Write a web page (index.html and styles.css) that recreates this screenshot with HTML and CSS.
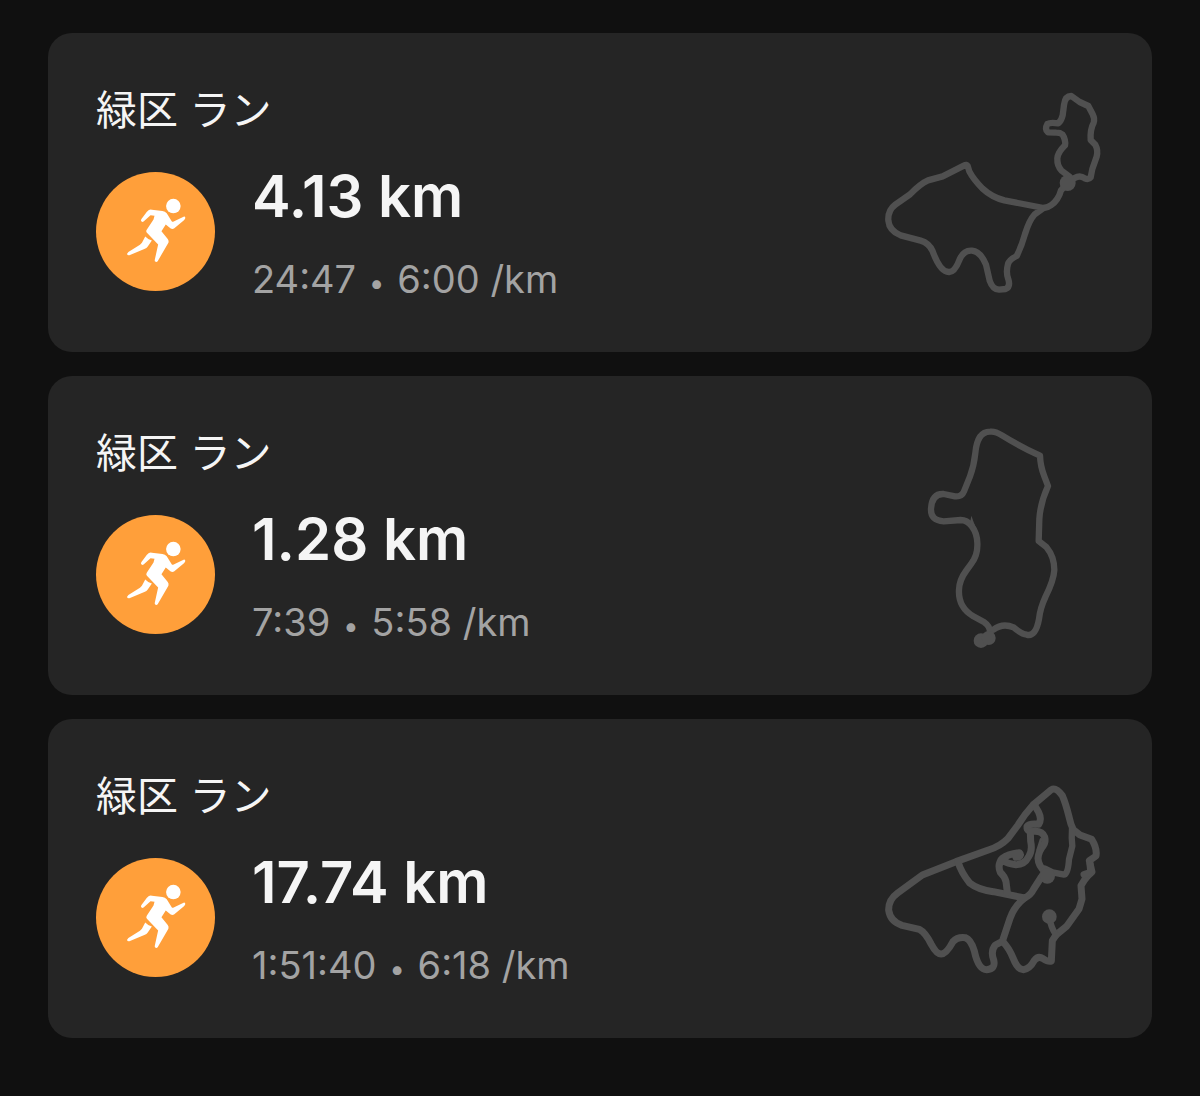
FILE: index.html
```
<!DOCTYPE html>
<html lang="ja">

<head>
  <meta charset="UTF-8" />
  <meta name="viewport" content="width=device-width, initial-scale=1.0" />
  <title>ラン</title>
  <link rel="stylesheet" href="styles.css">
</head>

<body>
  <!-- ランナーアイコン -->
  <svg class="symbols" aria-hidden="true">
    <symbol id="runner" viewBox="18 36 360 360">
      <circle cx="252" cy="139" r="22" />
      <path d="M178 151Q182 149 187 150L219 154Q227 155 232 161L247 185Q249 188 253 186L283 171Q289 170 288 176L285 181L254 207Q249 210 244 207L229 195L216 215L235 239Q239 244 237 250L205 305Q202 310 197 307Q195 305 196 301L206 255L172 220Q168 215 172 210L192 180L195 168L183 167L162 186Q156 189 154 183L155 179L172 156Z" />
      <path d="M167 231Q176 241 187 243L174 262Q171 266 166 268L119 288Q112 289 112 283L116 278L151 256L157 250Z" />
    </symbol>
  </svg>

  <ul class="runs">
    <li class="card">
      <div class="info">
        <h2 class="title">緑区 ラン</h2>
        <div class="summary">
          <div class="icon"><svg><use href="#runner" /></svg></div>
          <div class="stats">
            <p class="distance">4.13 km</p>
            <p class="pace">24:47 <span class="dot">•</span> 6:00 /km</p>
          </div>
        </div>
      </div>
      <svg class="route" viewBox="30 6 672 666">
        <path d="M599 290L575 272Q561 258 562 235Q563 218 585 196Q588 180 577 163Q571 158 559 158L534 157Q523 148 532 132Q541 126 565 130Q574 123 578 106L582 75Q585 48 604 48L629 66L655 78L668 103Q675 117 671 128Q660 148 662 180L676 194Q685 211 680 230L667 267L662 292Q656 300 644 295Q630 284 614 294L593 309" />
        <path d="M593 309L573 331Q565 360 544 375Q535 382 521 384L403 361Q366 352 337 325Q309 296 298 274L293 258Q290 252 283 256L218 289L174 301Q151 311 120 343L76 374Q53 391 55 422Q58 453 92 466L152 482Q177 489 188 514Q211 577 237 576Q254 577 269 538Q281 510 306 512Q332 515 348 554L359 602Q368 628 387 629L407 627Q422 620 415 598Q407 577 414 552Q418 539 440 528Q455 498 465 462Q478 420 494 403L521 384" />
        <circle class="spot" cx="593" cy="309" r="24" />
      </svg>
    </li>

    <li class="card">
      <div class="info">
        <h2 class="title">緑区 ラン</h2>
        <div class="summary">
          <div class="icon"><svg><use href="#runner" /></svg></div>
          <div class="stats">
            <p class="distance">1.28 km</p>
            <p class="pace">7:39 <span class="dot">•</span> 5:58 /km</p>
          </div>
        </div>
      </div>
      <svg class="route" viewBox="-90 30 672 666">
        <path d="M240 656Q242 635 223 622L190 604Q144 577 147 524Q148 495 168 468L184 446Q202 422 202 393Q204 358 185 333Q171 315 152 315L101 319Q61 317 63 281Q66 235 101 237L135 244Q155 246 162 229L180 184Q192 152 196 114Q202 49 241 50Q255 48 276 61Q331 95 390 122Q391 154 403 184L414 213Q391 264 388 312L386 378L409 396Q433 425 433 465Q431 496 407 544Q390 581 387 612Q377 667 350 659Q334 657 311 637Q278 623 250 644" />
        <path class="spike" d="M184 302L179 330L200 346Z" />
        <circle class="spot" cx="213" cy="677" r="22" />
        <circle class="spot" cx="236" cy="669" r="21" />
      </svg>
    </li>

    <li class="card">
      <div class="info">
        <h2 class="title">緑区 ラン</h2>
        <div class="summary">
          <div class="icon"><svg><use href="#runner" /></svg></div>
          <div class="stats">
            <p class="distance">17.74 km</p>
            <p class="pace">1:51:40 <span class="dot">•</span> 6:18 /km</p>
          </div>
        </div>
      </div>
      <svg class="route" viewBox="30 -21 672 666">
        <path class="wide" d="M558 480L590 454L627 402L636 372L633 332Q642 315 654 302L666 291L658 257L678 243Q682 220 665 193L630 180L610 164Q602 149 597 125Q587 85 577 62Q558 36 544 44L489 90Q462 120 444 150L414 190Q392 213 355 225L258 260L157 300L83 354Q55 374 56 406Q61 440 96 451L148 463Q166 472 184 508Q200 538 214 537Q229 537 249 500Q262 485 286 488Q303 494 313 528Q325 584 350 584Q378 582 371 555Q361 528 376 510L397 499L420 430Q433 393 464 369" />
        <path d="M538 425Q542 457 558 480" />
        <path class="wide" d="M397 499Q416 517 430 551Q443 584 460 584Q479 582 493 556Q505 541 519 551Q536 562 544 558L547 497L558 480" />
        <path class="wide" d="M264 260Q273 292 299 324Q324 344 370 350L464 369Q483 359 491 342L514 306L525 290" />
        <path class="wide" d="M525 290Q505 272 504 250Q506 228 520 212Q528 200 524 186Q517 167 490 169L478 168Q470 165 471 154Q477 145 506 148Q516 132 506 112L492 88" />
        <path class="wide" d="M412 352L408 320Q404 304 391 292Q381 269 397 250Q415 237 448 233Q456 240 446 246L438 247M393 254Q415 267 438 269Q464 269 476 245Q488 228 482 199L481 171" />
        <path class="thin" d="M513 193L503 225" />
        <path d="M606 160Q604 190 607 213L597 253Q594 299 582 299L548 292L525 281" />
        <path class="wide" d="M660 266L662 292L642 299" />
        <circle class="spot" cx="538" cy="425" r="22" />
        <circle class="spot" cx="532" cy="303" r="23" />
      </svg>
    </li>
  </ul>
</body>

</html>
```
FILE: styles.css
```
* {
  margin: 0;
  padding: 0;
  box-sizing: border-box;
}

body {
  background-color: #101010;
  color: #f5f5f5;
  font-family: Inter, "Noto Sans CJK JP", sans-serif;
}

li {
  list-style: none;
}

.symbols {
  display: none;
}

.runs {
  display: flex;
  flex-direction: column;
  gap: 24px;
  padding: 33px 48px;
}

.card {
  display: flex;
  align-items: flex-start;
  justify-content: space-between;
  padding: 49px 48px 48px;
  border-radius: 24px;
  background-color: #252525;
}

.title {
  margin-bottom: 22px;
  font-size: 41px;
  font-weight: 400;
  line-height: 56px;
}

.summary {
  display: flex;
  align-items: center;
  gap: 37px;
}

.icon {
  flex: none;
  width: 119px;
  height: 119px;
  border-radius: 50%;
  background-color: #ff9f3a;
}

.icon svg {
  display: block;
  width: 100%;
  height: 100%;
  fill: #fff;
}

.stats {
  display: flex;
  flex-direction: column;
  gap: 23px;
}

.distance {
  font-size: 58px;
  font-weight: 600;
  line-height: 72px;
}

.pace {
  color: #a3a3a3;
  font-size: 38px;
  line-height: 48px;
}

.dot {
  margin: 0 2px;
  font-size: 28px;
  line-height: 1;
  vertical-align: middle;
}

/* 走行ルート */
.route {
  flex: none;
  width: 224px;
  height: 222px;
  overflow: visible;
  fill: none;
  stroke: #505050;
  stroke-width: 19;
  stroke-linecap: round;
  stroke-linejoin: round;
}

.route .wide {
  stroke-width: 21;
}

.route .thin {
  stroke-width: 8;
}

.route .spot,
.route .spike {
  fill: #505050;
  stroke: none;
}
```
